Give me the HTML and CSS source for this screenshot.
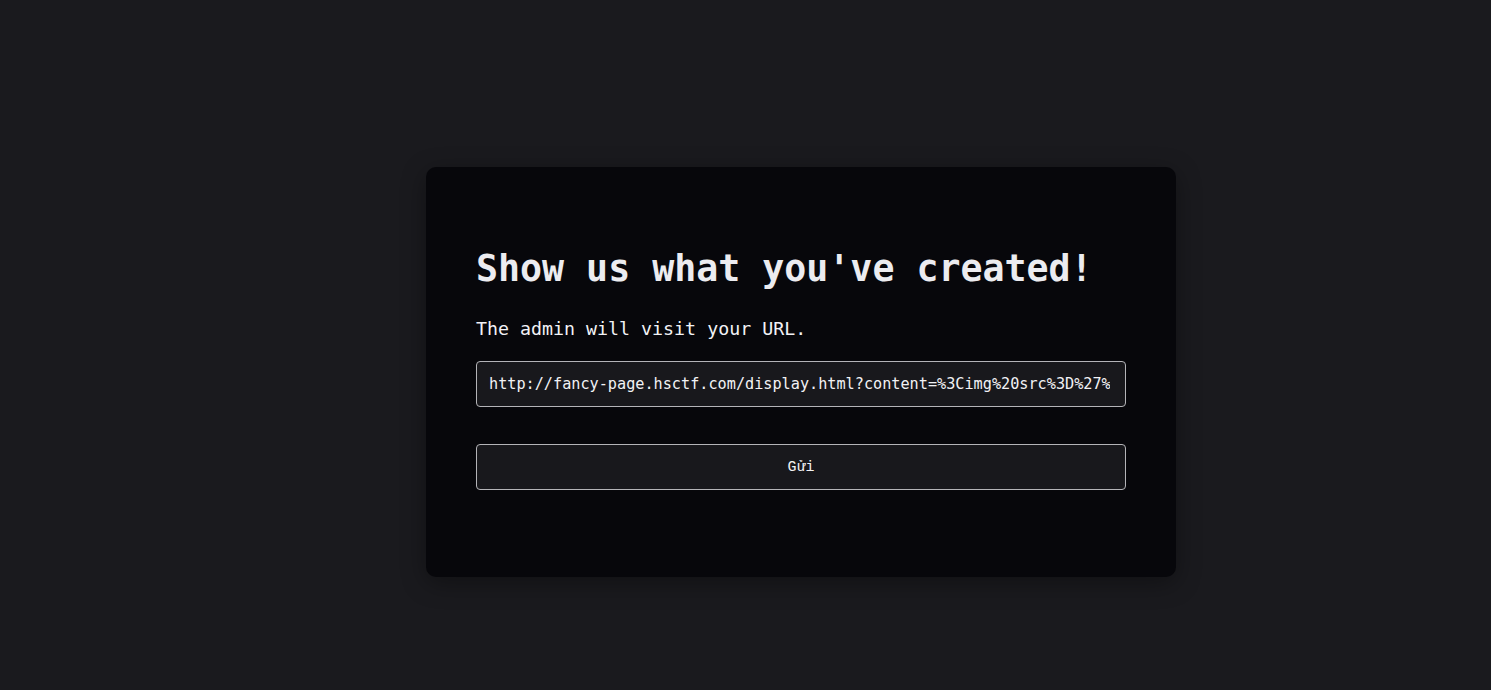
FILE: index.html
```html
<!DOCTYPE html>
<html lang="en">
<head>
<meta charset="utf-8">
<title>Submit</title>
<link rel="stylesheet" href="styles.css">
</head>
<body>
<main class="page">
  <form class="card">
    <h1 class="title">Show us what you've created!</h1>
    <p class="subtitle">The admin will visit your URL.</p>
    <input class="url-input" type="text" value="http://fancy-page.hsctf.com/display.html?content=%3Cimg%20src%3D%27%22%3E">
    <button class="submit" type="button">Gửi</button>
  </form>
</main>
</body>
</html>
```
FILE: styles.css
```css
html, body {
  margin: 0;
  padding: 0;
  background: #1a1a1e;
  height: 100%;
}
body {
  font-family: "DejaVu Sans Mono", "Liberation Mono", monospace;
  color: #eeeef2;
}
.page {
  display: flex;
  justify-content: center;
  padding-top: 167px;
  padding-left: 111px;
}
.card {
  width: 750px;
  box-sizing: border-box;
  padding: 50px 50px 87px;
  background: #07070b;
  border-radius: 10px;
  box-shadow: 0 6px 24px rgba(0, 0, 0, 0.35);
  display: flex;
  flex-direction: column;
}
.title {
  margin: 30px 0 0;
  font-size: 36.6px;
  line-height: 44px;
  font-weight: bold;
  color: #ececf0;
  white-space: nowrap;
}
.subtitle {
  margin: 26px 0 0;
  font-size: 18.3px;
  line-height: 24px;
  color: #f2f2f6;
}
.url-input {
  margin-top: 20px;
  height: 46px;
  box-sizing: border-box;
  padding: 0 15px 0 12px;
  background: #18181c;
  border: 1px solid #b4b4b8;
  border-radius: 4px;
  color: #f2f2f4;
  font-family: "DejaVu Sans Mono", "Liberation Mono", monospace;
  font-size: 15.2px;
  outline: none;
}
.submit {
  margin-top: 37px;
  height: 46px;
  box-sizing: border-box;
  background: #18181c;
  border: 1px solid #b4b4b8;
  border-radius: 4px;
  color: #f2f2f4;
  font-family: "Liberation Mono", "DejaVu Sans Mono", monospace;
  font-size: 15px;
  cursor: pointer;
}
```
